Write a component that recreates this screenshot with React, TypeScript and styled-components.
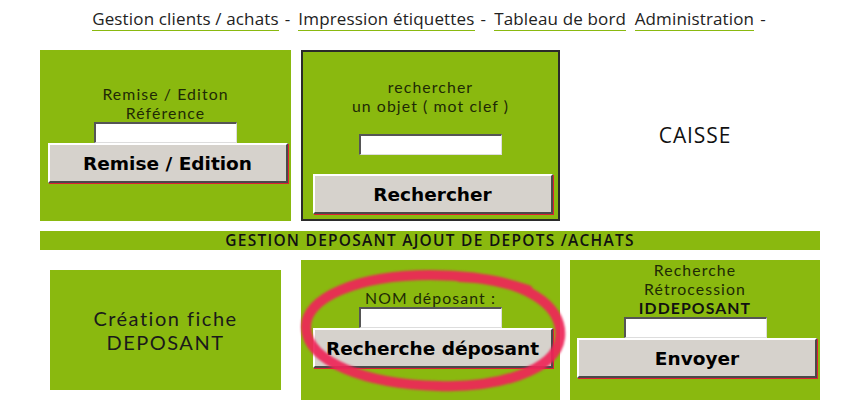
import React from "react";
import styled, { createGlobalStyle } from "styled-components";

const GREEN = "#8ab90f";

const Global = createGlobalStyle`
  html, body { margin: 0; padding: 0; background: #fff; }
  body { font-family: "Open Sans", "DejaVu Sans", sans-serif; color: #1b1b1b; }
`;

const Page = styled.div`
  width: 866px;
  height: 416px;
  position: relative;
  overflow: hidden;
`;

const Nav = styled.nav`
  display: flex;
  justify-content: center;
  align-items: baseline;
  padding: 7px 0 0 0;
  height: 41px;
  box-sizing: border-box;
  font-size: 17px;
  letter-spacing: 0.15px;
  color: #222;
`;

const NavLink = styled.a`
  color: #222;
  text-decoration: none;
  border-bottom: 1px solid ${GREEN};
  line-height: 22px;
`;

const Sep = styled.span<{ $wide?: boolean }>`
  margin: ${(p) => (p.$wide ? "0 8px 0 6px" : "0 0 0 4px")};
`;

const Grid = styled.div`
  margin-left: 40px;
  width: 780px;
  display: grid;
  grid-template-columns: 251px 259px 250px;
  column-gap: 10px;
  margin-top: 9px;
`;

const Cell = styled.div<{ $h: number; $framed?: boolean; $bg?: boolean }>`
  height: ${(p) => p.$h}px;
  box-sizing: border-box;
  display: flex;
  flex-direction: column;
  align-items: center;
  background: ${(p) => (p.$bg === false ? "transparent" : GREEN)};
  border: ${(p) => (p.$framed ? "2px solid #2b2b2b" : "none")};
`;

const Label = styled.div`
  font-family: Lato, "Open Sans", sans-serif;
  font-size: 15.8px;
  letter-spacing: 1.1px;
  line-height: 19px;
  text-align: center;
  color: #1e2a05;
  white-space: nowrap;
`;

const Strong = styled.div`
  font-family: Lato, "Open Sans", sans-serif;
  font-size: 15.8px;
  font-weight: bold;
  letter-spacing: 1.1px;
  line-height: 19px;
  color: #111;
  white-space: nowrap;
`;

const Input = styled.input`
  box-sizing: border-box;
  width: 143px;
  height: 21px;
  border-style: solid;
  border-width: 2px 1px 1px 2px;
  border-color: #555 #ddd #ddd #555;
  background: #fff;
  padding: 0;
  margin: 0;
  display: block;
  flex: none;
`;

const Button = styled.button`
  box-sizing: border-box;
  width: 240px;
  height: 40px;
  flex: none;
  background: #d6d2cc;
  border-style: solid;
  border-width: 2px;
  border-color: #fff #4a4a4a #4a4a4a #fff;
  box-shadow: 1px 1px 0 #d23;
  font-family: "DejaVu Sans", Verdana, sans-serif;
  font-weight: bold;
  font-size: 18.5px;
  color: #000;
  padding: 0;
  margin: 0 0 0 4px;
  display: block;
`;

const Spacer = styled.div<{ $h: number }>`
  height: ${(p) => p.$h}px;
  flex: none;
`;

const Bar = styled.div`
  margin: 10px 0 10px 40px;
  width: 780px;
  height: 19px;
  background: ${GREEN};
  text-align: center;
  font-size: 15.5px;
  font-weight: 600;
  letter-spacing: 1.25px;
  line-height: 19px;
  color: #111;
  white-space: nowrap;
`;

const Caisse = styled.div`
  font-size: 21px;
  letter-spacing: 0.9px;
  margin-top: 71px;
  color: #111;
`;

const InnerBox = styled.div`
  margin: 10px;
  flex: 1;
  align-self: stretch;
  background: ${GREEN};
  display: flex;
  align-items: center;
  justify-content: center;
  text-align: center;
  font-family: Lato, "Open Sans", sans-serif;
  font-size: 20px;
  letter-spacing: 1.5px;
  line-height: 24px;
  color: #1a1a1a;
`;

const Circle = styled.svg`
  position: absolute;
  left: 290px;
  top: 262px;
  width: 290px;
  height: 140px;
  pointer-events: none;
  filter: blur(1.3px);
`;

export default function App() {
  return (
    <Page>
      <Global />
      <Nav>
        <NavLink>Gestion clients / achats</NavLink>
        <Sep $wide>-</Sep>
        <NavLink>Impression étiquettes</NavLink>
        <Sep $wide>-</Sep>
        <NavLink>Tableau de bord</NavLink>
        <Sep>{"\u00a0"}</Sep>
        <NavLink>Administration</NavLink>
        <Sep $wide>-</Sep>
      </Nav>
      <Grid>
        <Cell $h={171}>
          <Spacer $h={34} />
          <Label>Remise / Editon</Label>
          <Label>Référence</Label>
          <Input />
          <Button>Remise / Edition</Button>
        </Cell>
        <Cell $h={171} $framed>
          <Spacer $h={25} />
          <Label>rechercher</Label>
          <Label>un objet ( mot clef )</Label>
          <Spacer $h={19} />
          <Input />
          <Spacer $h={19} />
          <Button>Rechercher</Button>
        </Cell>
        <Cell $h={171} $bg={false}>
          <Caisse>CAISSE</Caisse>
        </Cell>
      </Grid>
      <Bar>GESTION DEPOSANT AJOUT DE DEPOTS /ACHATS</Bar>
      <Grid style={{ marginTop: 0 }}>
        <Cell $h={140} $bg={false}>
          <InnerBox>
            Création fiche
            <br />
            DEPOSANT
          </InnerBox>
        </Cell>
        <Cell $h={140}>
          <Spacer $h={28} />
          <Label>NOM déposant :</Label>
          <Input />
          <Button>Recherche déposant</Button>
        </Cell>
        <Cell $h={140}>
          <Label>Recherche</Label>
          <Label>Rétrocession</Label>
          <Strong>IDDEPOSANT</Strong>
          <Input />
          <Button>Envoyer</Button>
        </Cell>
      </Grid>
      <Circle viewBox="0 0 290 140">
        <path
          d="M 170 15 C 232 17, 274 42, 270 76 C 266 110, 205 126, 148 124 C 75 122, 18 100, 16 66 C 14 36, 68 13, 140 13 C 182 13, 212 19, 238 28"
          fill="none"
          stroke="#ee2558"
          strokeWidth="10"
          strokeLinecap="round"
          opacity="0.92"
        />
      </Circle>
    </Page>
  );
}
